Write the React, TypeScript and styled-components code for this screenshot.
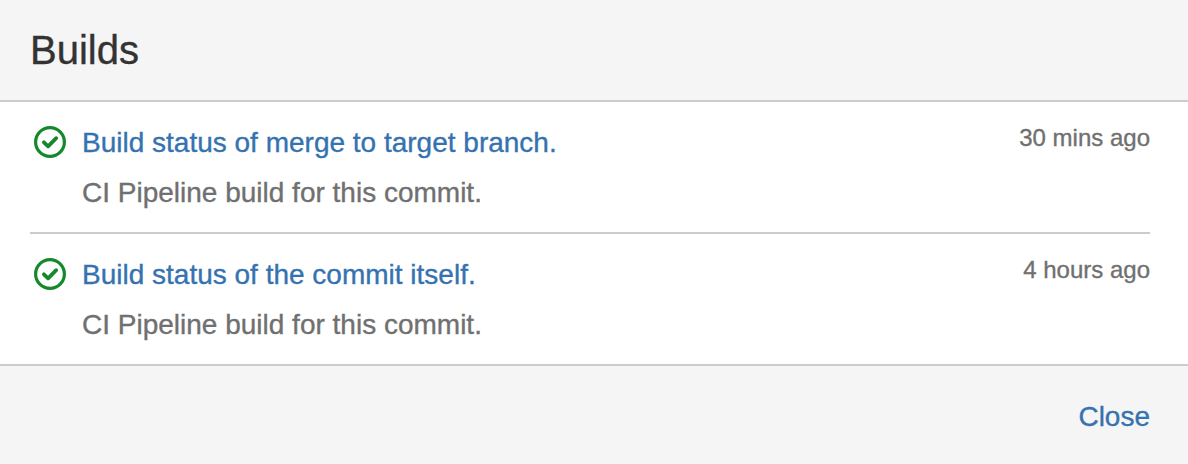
import React from "react";
import styled, { createGlobalStyle } from "styled-components";

const GlobalStyle = createGlobalStyle`
  * { box-sizing: border-box; }
  body { margin: 0; background: #fff; font-family: "Liberation Sans", Arial, sans-serif; -webkit-text-stroke: 0.35px currentColor; }
`;

const Dialog = styled.section`
  display: flex;
  flex-direction: column;
  width: 1188px;
  height: 464px;
  background: #fff;
`;

const Header = styled.header`
  height: 102px;
  padding: 26px 30px 0;
  background: #f5f5f5;
  border-bottom: 2px solid #ccc;
`;

const Title = styled.h1`
  margin: 0;
  font-size: 40px;
  line-height: 48px;
  font-weight: 400;
  color: #333;
`;

const BuildList = styled.ul`
  list-style: none;
  margin: 0;
  padding: 0 38px 0 30px;
  height: 262px;
`;

const BuildItem = styled.li`
  display: flex;
  align-items: flex-start;
  height: 132px;
  padding: 20px 0 0 4px;
  & + & { border-top: 2px solid #ccc; }
  &:first-child { height: 130px; }
`;

const StatusIcon = styled.svg`
  flex: none;
  width: 32px;
  height: 32px;
  margin: 4px 16px 0 0;
`;

const Details = styled.div`
  flex: 1;
  padding-top: 1px;
`;

const BuildLink = styled.a`
  display: block;
  font-size: 28px;
  line-height: 40px;
  color: #3572b0;
  text-decoration: none;
`;

const Description = styled.p`
  margin: 10px 0 0;
  font-size: 28px;
  line-height: 40px;
  color: #707070;
`;

const Time = styled.time`
  font-size: 24px;
  line-height: 32px;
  color: #707070;
`;

const Footer = styled.footer`
  display: flex;
  justify-content: flex-end;
  align-items: flex-start;
  height: 100px;
  padding: 31px 38px 0;
  background: #f5f5f5;
  border-top: 2px solid #ccc;
`;

const CloseButton = styled.button`
  padding: 0;
  border: 0;
  background: none;
  font: 28px/40px "Liberation Sans", Arial, sans-serif;
  color: #3572b0;
`;

const builds = [
  { name: "Build status of merge to target branch.", time: "30 mins ago" },
  { name: "Build status of the commit itself.", time: "4 hours ago" },
];

export default function App() {
  return (
    <>
      <GlobalStyle />
      <Dialog>
        <Header><Title>Builds</Title></Header>
        <BuildList>
          {builds.map((build) => (
            <BuildItem key={build.name}>
              <StatusIcon viewBox="0 0 32 32" fill="none" stroke="#14892c">
                <circle cx="16" cy="16" r="14.4" strokeWidth="3.2" />
                <path d="M9.9 16.3l4.2 4 8.1-8.1" strokeWidth="3.8" strokeLinecap="round" strokeLinejoin="round" />
              </StatusIcon>
              <Details>
                <BuildLink>{build.name}</BuildLink>
                <Description>CI Pipeline build for this commit.</Description>
              </Details>
              <Time>{build.time}</Time>
            </BuildItem>
          ))}
        </BuildList>
        <Footer><CloseButton>Close</CloseButton></Footer>
      </Dialog>
    </>
  );
}
